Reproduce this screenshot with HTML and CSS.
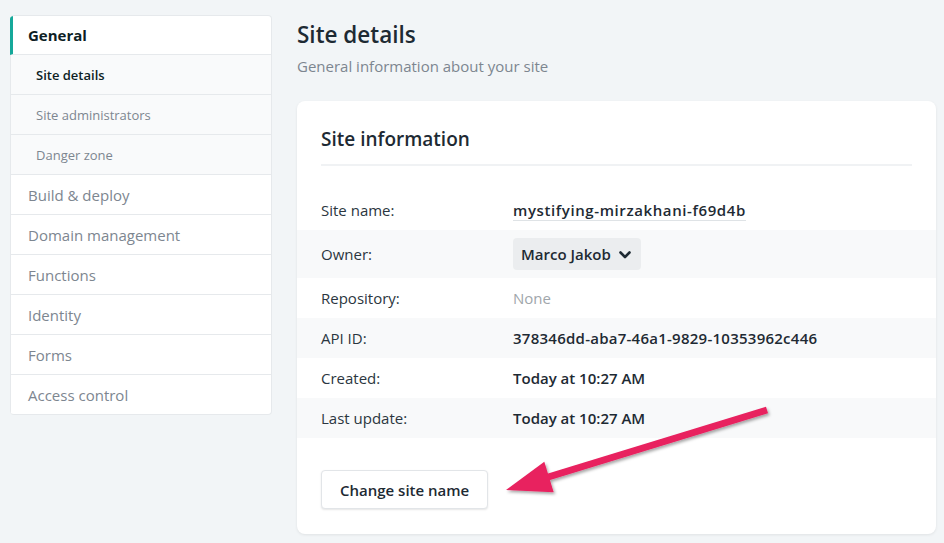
FILE: index.html
```html
<!DOCTYPE html>
<html>
<head>
<meta charset="utf-8">
<link rel="stylesheet" href="styles.css">
</head>
<body>
<div class="layout">
  <nav class="sidebar">
    <a class="nav-item active">General</a>
    <a class="nav-sub current">Site details</a>
    <a class="nav-sub">Site administrators</a>
    <a class="nav-sub">Danger zone</a>
    <a class="nav-item">Build &amp; deploy</a>
    <a class="nav-item">Domain management</a>
    <a class="nav-item">Functions</a>
    <a class="nav-item">Identity</a>
    <a class="nav-item">Forms</a>
    <a class="nav-item last">Access control</a>
  </nav>
  <main class="main">
    <h1 class="title">Site details</h1>
    <p class="subtitle">General information about your site</p>
    <section class="card">
      <h2 class="card-title">Site information</h2>
      <div class="rows">
        <div class="row"><span class="label">Site name:</span><span class="value underline wide">mystifying-mirzakhani-f69d4b</span></div>
        <div class="row alt tall"><span class="label">Owner:</span><span class="value"><span class="select">Marco Jakob <svg class="chev" width="12" height="8" viewBox="0 0 12 8"><path d="M1.5 1.5 L6 6 L10.5 1.5" fill="none" stroke="#1e2a33" stroke-width="2.6" stroke-linecap="round" stroke-linejoin="round"/></svg></span></span></div>
        <div class="row"><span class="label">Repository:</span><span class="value muted">None</span></div>
        <div class="row alt"><span class="label">API ID:</span><span class="value mid">378346dd-aba7-46a1-9829-10353962c446</span></div>
        <div class="row"><span class="label">Created:</span><span class="value">Today at 10:27 AM</span></div>
        <div class="row alt"><span class="label">Last update:</span><span class="value">Today at 10:27 AM</span></div>
      </div>
      <button class="btn">Change site name</button>
    </section>
  </main>
</div>
<svg class="arrow" width="944" height="543" viewBox="0 0 944 543">
  <defs>
    <filter id="sh" x="-20%" y="-20%" width="140%" height="140%">
      <feDropShadow dx="1.5" dy="2" stdDeviation="1.5" flood-color="#000" flood-opacity="0.35"/>
    </filter>
  </defs>
  <g filter="url(#sh)" fill="#e8205f">
    <polygon points="545.2,481.6 543.2,475.0 766,406.7 768,413.3"/>
    <polygon points="506,490 544.3,461.7 549,477 553.7,492.3"/>
  </g>
</svg>
</body>
</html>
```

FILE: styles.css
```css
* { box-sizing: border-box; }
html, body { margin: 0; padding: 0; }
body {
  background: #f2f5f7;
  font-family: "Open Sans", "Noto Sans", sans-serif;
  color: #1e2a33;
  width: 944px;
  height: 543px;
  overflow: hidden;
  position: relative;
}
.layout {
  display: flex;
  gap: 25px;
  padding: 14px 8px 0 10px;
  align-items: flex-start;
}
.sidebar {
  width: 262px;
  flex: none;
  display: flex;
  flex-direction: column;
  background: #fff;
  border: 1px solid #e6e9ec;
  border-left: none;
  border-radius: 4px;
  overflow: hidden;
  margin-top: 1px;
}
.nav-item, .nav-sub {
  display: flex;
  align-items: center;
  height: 40px;
  border-bottom: 1px solid #e6e9ec;
  border-left: 1px solid #e6e9ec;
  padding-left: 17px;
  font-size: 15px;
  color: #7d8690;
}
.nav-item.last { border-bottom: none; height: 39px; }
.nav-item.active {
  color: #0e1e25;
  font-weight: 700;
  border-left: 3px solid #15a89a;
  padding-left: 15px;
  height: 39px;
}
.nav-sub {
  background: #f9fafb;
  padding-left: 25px;
  font-size: 13px;
}
.nav-sub.current { color: #0e1e25; font-weight: 600; }
.main {
  flex: 1;
  display: flex;
  flex-direction: column;
}
.title {
  margin: 0;
  font-size: 22.5px;
  font-weight: 600;
  line-height: 32px;
  height: 41px;
  padding-top: 5px;
  color: #1e2a33;
}
.subtitle {
  margin: 0;
  font-size: 15px;
  line-height: 22px;
  color: #7d8690;
  height: 46px;
}
.card {
  width: 639px;
  background: #fff;
  border-radius: 8px;
  box-shadow: 0 1px 3px rgba(0,0,0,0.08);
  padding: 24px 24px 25px;
  display: flex;
  flex-direction: column;
  align-items: flex-start;
}
.card-title {
  margin: 0;
  font-size: 19px;
  font-weight: 600;
  line-height: 28px;
  width: 100%;
  padding-bottom: 11px;
  border-bottom: 2px solid #f0f2f4;
  color: #1e2a33;
}
.rows {
  margin: 24px -24px 0;
  width: calc(100% + 48px);
  display: flex;
  flex-direction: column;
}
.row {
  display: flex;
  align-items: center;
  height: 40px;
  padding-left: 24px;
  font-size: 15px;
}
.row.tall { height: 48px; }
.row.alt { background: #f8f9fa; }
.label { width: 192px; color: #2b3640; }
.value { font-weight: 600; color: #1e2a33; }
.value.wide { letter-spacing: 0.6px; }
.value.mid { letter-spacing: 0.25px; }
.value.muted { font-weight: 400; color: #a0a6ab; }
.underline { border-bottom: 1px solid #dfe3e6; line-height: 19px; margin-top: 2px; }
.select {
  display: inline-flex;
  align-items: center;
  gap: 8px;
  height: 32px;
  padding: 0 10px 0 8px;
  background: #ebedef;
  border-radius: 4px;
}
.chev { margin-top: 1px; }
.btn {
  margin-top: 32px;
  height: 39px;
  padding: 0 18px;
  font-family: inherit;
  font-size: 15px;
  font-weight: 600;
  color: #1e2a33;
  background: #fff;
  border: 1px solid #e2e5e8;
  border-radius: 4px;
  box-shadow: 0 1px 2px rgba(0,0,0,0.1);
}
.arrow {
  position: absolute;
  left: 0;
  top: 0;
  pointer-events: none;
}
```
